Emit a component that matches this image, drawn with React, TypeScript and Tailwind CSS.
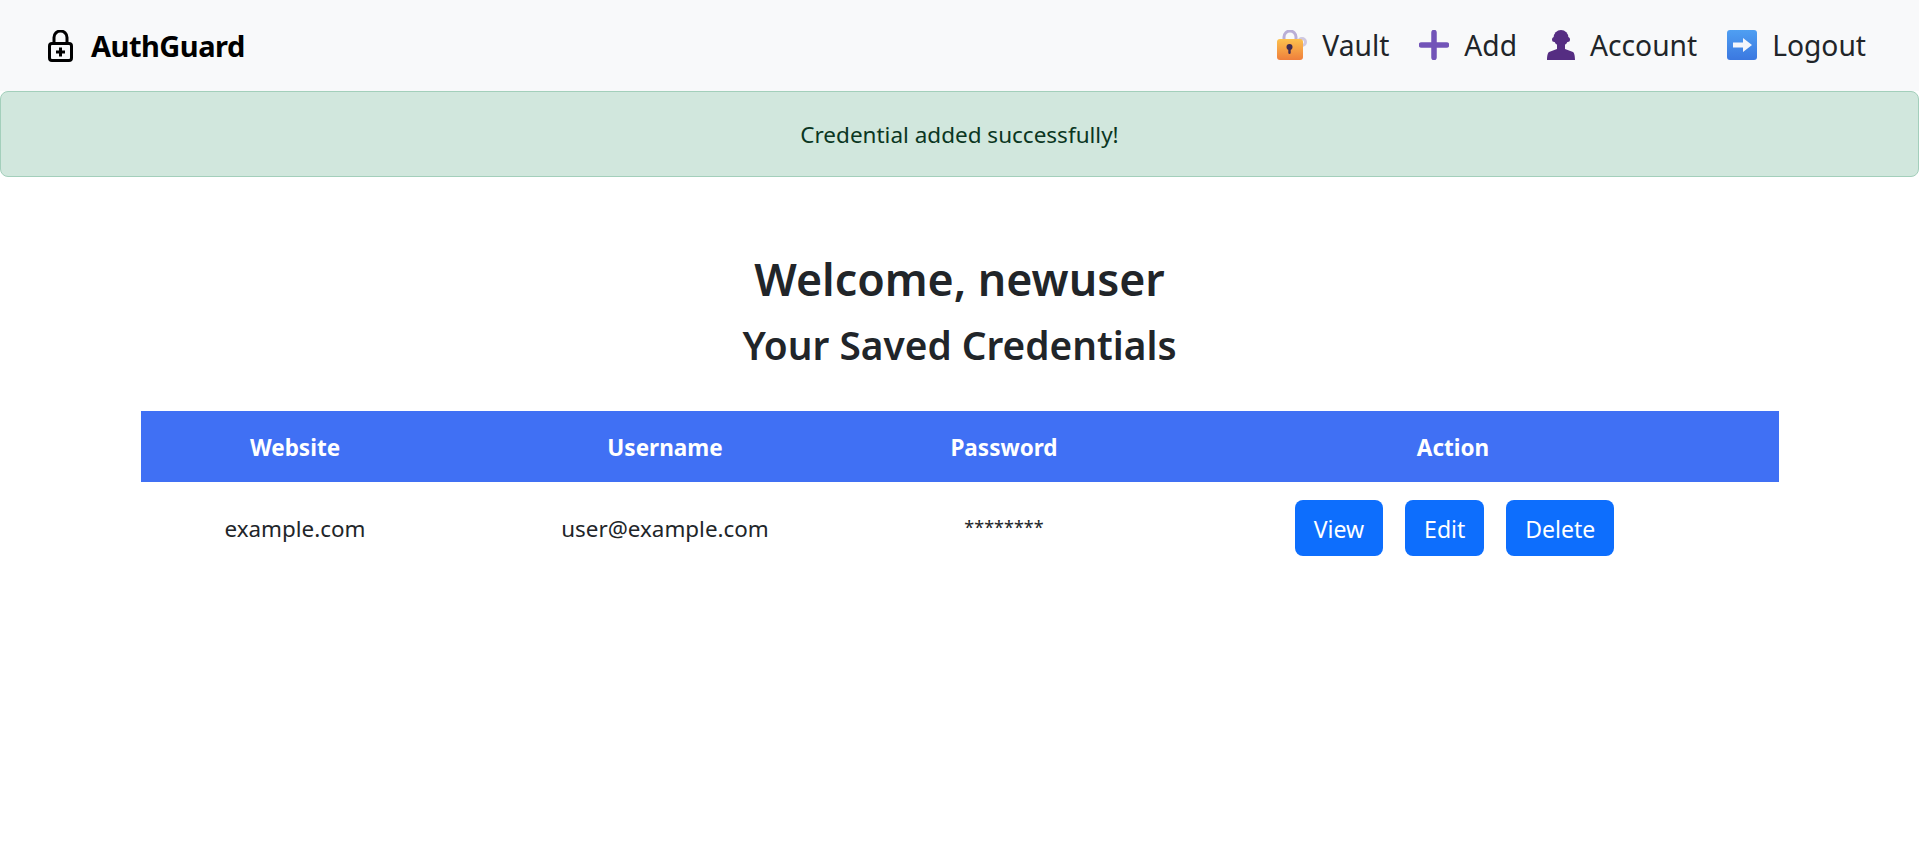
const NavLock = () => (
  <svg width="25" height="32" viewBox="0 0 25 32" fill="none" stroke="#000" strokeWidth="3">
    <path d="M6 14V7.500a6.500 6.500 0 0 1 13 0V14" />
    <rect x="1.500" y="13.500" width="22" height="17" rx="2.500" />
    <path d="M12.500 17.500v9M8 22h9" />
  </svg>
);

const VaultIcon = () => (
  <svg width="30" height="30" viewBox="0 0 30 30">
    <defs>
      <linearGradient id="lockBody" x1="0" y1="0" x2="0" y2="1">
        <stop offset="0" stopColor="#fcc14d" />
        <stop offset="1" stopColor="#ef7f3c" />
      </linearGradient>
    </defs>
    <circle cx="25" cy="12" r="3.500" fill="none" stroke="#cfc8e0" strokeWidth="3" />
    <path d="M23.500 15l-2 8" stroke="#cfc8e0" strokeWidth="3" />
    <path d="M7 10V7a6 6 0 0 1 12 0v3" fill="none" stroke="#b9aed6" strokeWidth="3" />
    <rect x="0" y="9" width="26" height="21" rx="3" fill="url(#lockBody)" />
    <circle cx="12.500" cy="17" r="3" fill="#3d2a52" />
    <rect x="11.300" y="17" width="2.400" height="7" rx="1.200" fill="#3d2a52" />
  </svg>
);

const AddIcon = () => (
  <svg width="30" height="30" viewBox="0 0 30 30">
    <path d="M15 2.500v25M2.500 15h25" stroke="#7254b8" strokeWidth="5.500" strokeLinecap="round" />
  </svg>
);

const AccountIcon = () => (
  <svg width="28" height="30" viewBox="0 0 28 30" fill="#552d82">
    <ellipse cx="14" cy="8" rx="7.500" ry="8" />
    <rect x="5" y="7" width="18" height="5" rx="2.500" />
    <path d="M10 14h8v5l8 3c1.500 1 2 5 2 8H0c0-3 .5-7 2-8l8-3z" />
  </svg>
);

const LogoutIcon = () => (
  <svg width="30" height="30" viewBox="0 0 30 30">
    <defs>
      <linearGradient id="logoutBg" x1="0" y1="0" x2="0" y2="1">
        <stop offset="0" stopColor="#4f9ff2" />
        <stop offset="1" stopColor="#3b78e0" />
      </linearGradient>
    </defs>
    <rect x="0" y="0" width="30" height="30" rx="3" fill="url(#logoutBg)" />
    <path d="M6 12.500h10V8l9 7-9 7v-4.500H6z" fill="#f4f6fb" />
  </svg>
);

const navItems = [
  { label: "Vault", icon: <VaultIcon /> },
  { label: "Add", icon: <AddIcon /> },
  { label: "Account", icon: <AccountIcon /> },
  { label: "Logout", icon: <LogoutIcon /> },
];

const columns = [
  { label: "Website", width: "w-[308px]" },
  { label: "Username", width: "w-[432px]" },
  { label: "Password", width: "w-[246px]" },
  { label: "Action", width: "w-[652px]" },
];

const actions = ["View", "Edit", "Delete"];

export default function App() {
  return (
    <div className="min-h-[868px] bg-white text-[#212529] font-['Noto_Sans','Open_Sans',sans-serif]">
      <nav className="h-[91px] bg-[#f8f9fa] flex items-center justify-between pl-[48px] pr-[53px]">
        <div className="flex items-center gap-[18px] text-black">
          <NavLock />
          <span className="text-[29px] font-bold tracking-[-0.5px]">AuthGuard</span>
        </div>
        <div className="flex items-center gap-[30px]">
          {navItems.map((item) => (
            <a key={item.label} className="flex items-center gap-[15px] text-[28.2px]">
              {item.icon}
              <span>{item.label}</span>
            </a>
          ))}
        </div>
      </nav>

      <div className="h-[86px] pt-[2px] bg-[#d1e7dd] border border-[#a3cfbb] rounded-lg flex items-center justify-center text-[#0a3622] text-[22.5px]">
        Credential added successfully!
      </div>

      <div className="px-[141px]">
        <h1 className="mt-[72px] text-center text-[44.7px] font-semibold leading-[60px]">Welcome, newuser</h1>
        <h2 className="mt-[11px] text-center text-[38.8px] font-semibold leading-[50px]">Your Saved Credentials</h2>

        <table className="mt-[41px] w-full table-fixed border-collapse">
          <thead>
            <tr className="h-[71px] bg-[#4070f4] text-white">
              {columns.map((col) => (
                <th key={col.label} className={`${col.width} pt-[2px] text-[22.5px] font-bold`}>{col.label}</th>
              ))}
            </tr>
          </thead>
          <tbody>
            <tr className="h-[92px] text-[22.4px]">
              <td className="text-center pt-[2px]">example.com</td>
              <td className="text-center pt-[2px]">user@example.com</td>
              <td className="text-center text-[18px] pb-[2px]">********</td>
              <td>
                <div className="flex justify-center gap-[22px] pl-[3px]">
                  {actions.map((a) => (
                    <button key={a} className="h-[56px] pt-[2px] px-[19px] rounded-lg bg-[#0d6efd] text-white text-[23px]">
                      {a}
                    </button>
                  ))}
                </div>
              </td>
            </tr>
          </tbody>
        </table>
      </div>
    </div>
  );
}
